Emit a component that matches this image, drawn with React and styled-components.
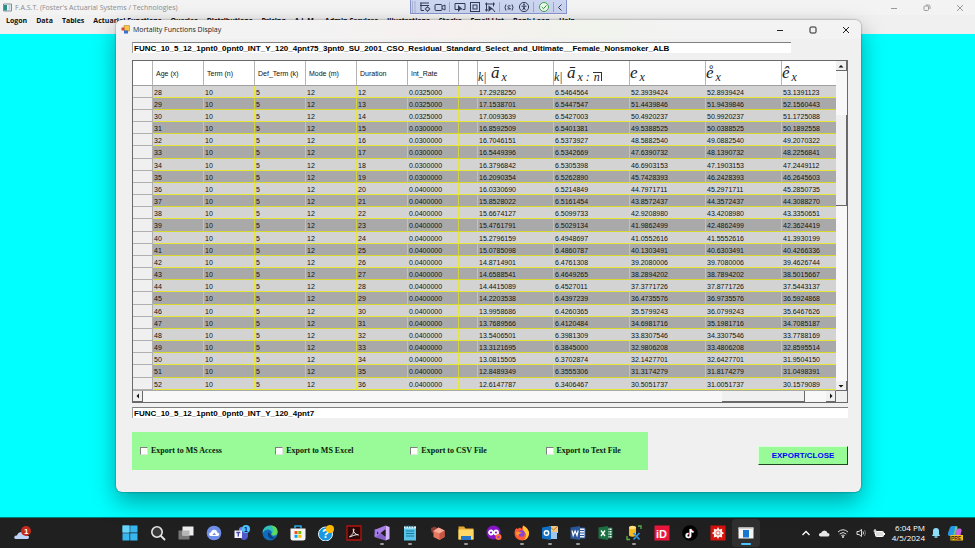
import React from 'react';
import styled, { createGlobalStyle } from 'styled-components';

const GlobalStyles = createGlobalStyle`
  * {
    box-sizing: border-box;
    margin: 0;
    padding: 0;
  }
  body {
    background-color: cyan;
    color: #111;
    font-family: "Open Sans", "Noto Sans", sans-serif;
    font-size: 8px;
  }
  button {
    background: none;
    border: none;
    color: inherit;
    font: inherit;
  }
  svg {
    display: block;
  }
`;

const Screen = styled.div`
  display: flex;
  flex-direction: column;
  height: 100vh;
  overflow: hidden;
  position: relative;
`;

const TitleBar = styled.header`
  align-items: center;
  background: ${(p) => (p.$active ? 'linear-gradient(90deg, #f3f3f3 25%, #f6f0ef 45%, #f1f3ec 62%, #f3f3f3 75%)' : '#f3f3f3')};
  color: ${(p) => (p.$active ? '#222' : '#8c8c8c')};
  display: flex;
  flex-shrink: 0;
  gap: 3px;
  height: ${(p) => (p.$active ? 19 : 15)}px;
  padding-left: ${(p) => (p.$active ? 5 : 3)}px;
`;

const TitleText = styled.h1`
  flex: 1;
  font-size: 7px;
  font-weight: 400;
  line-height: 12px;
  white-space: nowrap;
`;

const WindowButton = styled.button`
  display: flex;
  justify-content: center;
  width: 30px;
`;

const MenuBar = styled.nav`
  background: #f0f0f0;
  display: flex;
  flex-shrink: 0;
  gap: 9px;
  height: 19px;
  padding: 0 6px;
`;

const MenuItem = styled.button`
  font-size: 7px;
  font-weight: 700;
  height: 12px;
  line-height: 12px;
  white-space: nowrap;
`;

const Desktop = styled.main`
  background: cyan;
  flex: 1;
`;

const DebugBar = styled.div`
  align-items: center;
  background: #ccd5f0;
  border: 1px solid #8795cf;
  border-top: none;
  display: flex;
  height: 14px;
  justify-content: space-between;
  left: 410px;
  padding: 0 3px 0 1px;
  position: absolute;
  top: 0;
  width: 157px;
`;

const Divider = styled.span`
  background: #9aa6cf;
  height: 10px;
  width: 1px;
`;

const Dialog = styled.section`
  background: #f0f0f0;
  border-radius: 6px;
  bottom: 56px;
  box-shadow: 0 0 2px rgba(0, 0, 0, 0.5), 0 10px 24px rgba(0, 0, 0, 0.36);
  display: flex;
  flex-direction: column;
  left: 116px;
  overflow: hidden;
  position: absolute;
  right: 114px;
  top: 20px;
`;

const DialogBody = styled.div`
  display: flex;
  flex: 1;
  flex-direction: column;
  min-height: 0;
  padding: 3px 13px 22px 16px;
`;

const TextBox = styled.input`
  background: white;
  border: none;
  border-left: 1px solid #a0a0a0;
  border-top: 1px solid #808080;
  color: black;
  flex-shrink: 0;
  font-family: "Liberation Sans", Arial, sans-serif;
  font-size: 8px;
  font-weight: 700;
  height: 11px;
  line-height: 10px;
  outline: none;
  padding-left: 1px;
  width: ${(p) => p.$width};
`;

const GridFrame = styled.div`
  background: #f0f0f0;
  border: 1px solid #696969;
  display: grid;
  flex: 1;
  grid-template-columns: 1fr 11px;
  grid-template-rows: 1fr 11px;
  margin: 7px 0 4px;
  min-height: 0;
`;

const GridView = styled.div`
  background: #a9a9a9;
  min-height: 0;
  overflow: hidden;
`;

const Table = styled.table`
  border-collapse: separate;
  border-spacing: 0;
  font-family: "Liberation Sans", Arial, sans-serif;
  font-size: 7px;
  line-height: 9px;
  table-layout: fixed;
  width: 100%;
`;

const Col = styled.col`
  width: ${(p) => (p.$width ? `${p.$width}px` : 'auto')};
`;

const HeadCell = styled.th`
  background: white;
  border-bottom: 1px solid #a0a0a0;
  border-right: 1px solid #b4b4b4;
  font-weight: 400;
  height: 25px;
  padding: 0 0 0 ${(p) => (p.$math ? 0 : 3)}px;
  text-align: left;
  white-space: nowrap;
  &:last-child {
    border-right: none;
  }
`;

const RowHead = styled.th`
  background: #f0f0f0;
  border-bottom: 1px solid #b0b0b0;
  border-right: 1px solid #b0b0b0;
`;

const Cell = styled.td`
  background: #d3d3d3;
  border-bottom: 1px solid #e6e636;
  border-right: 1px solid #e6e64a;
  padding: 1px 0 0 1px;
  white-space: nowrap;
  &:last-child {
    border-right: none;
  }
`;

const Row = styled.tr`
  height: 12px;
  &:nth-child(6n) {
    height: 13px;
  }
  &:nth-child(even) ${Cell} {
    background: #a9a9a9;
    border-bottom-color: #d8d82c;
    border-right-color: #d2d23c;
  }
`;

const Formula = styled.span`
  color: #222;
  display: block;
  font-family: "Liberation Serif", "Times New Roman", serif;
  font-size: 17px;
  font-style: italic;
  line-height: 20px;
`;

const Low = styled.sub`
  font-size: 12px;
  line-height: 0;
  padding-left: ${(p) => (p.$after ? 2 : 0)}px;
  vertical-align: -3px;
`;

const Angle = styled.span`
  border-right: 1px solid #333;
  border-top: 1px solid #333;
  display: inline-block;
  line-height: 8px;
  padding: 0 1px;
`;

const ScrollBar = styled.div`
  background: #f8f8f8;
  display: flex;
  flex-direction: ${(p) => (p.$vertical ? 'column' : 'row')};
`;

const ScrollButton = styled.button`
  align-items: center;
  background: #f0f0f0;
  border-bottom: 1px solid #696969;
  border-right: 1px solid #696969;
  display: flex;
  flex-shrink: 0;
  height: ${(p) => (p.$vertical ? '10px' : 'auto')};
  justify-content: center;
  width: ${(p) => (p.$vertical ? 'auto' : '10px')};
`;

const Track = styled.span`
  flex: ${(p) => p.$grow};
`;

const Thumb = styled.span`
  background: #f0f0f0;
  border-bottom: 1px solid #696969;
  border-right: 1px solid #696969;
  flex: ${(p) => p.$grow};
`;

const Footer = styled.footer`
  align-items: center;
  display: flex;
  flex-shrink: 0;
  justify-content: space-between;
  margin-top: 14px;
`;

const ExportPanel = styled.fieldset`
  align-items: center;
  background: #98fb98;
  border: none;
  display: grid;
  grid-template-columns: 1fr 1fr 1fr 76px;
  height: 38px;
  padding: 0 26px 0 8px;
  width: 72%;
`;

const CheckLabel = styled.label`
  align-items: center;
  color: #0a1a0a;
  display: flex;
  font-family: "Liberation Serif", "Times New Roman", serif;
  font-size: 8px;
  font-weight: 700;
  gap: 3px;
  line-height: 10px;
  white-space: nowrap;
`;

const CheckBox = styled.input`
  appearance: none;
  background: white;
  border: 1px solid #e3e3e3;
  border-left-color: #808080;
  border-top-color: #808080;
  height: 8px;
  width: 8px;
  &:checked {
    background: #333;
  }
`;

const ExportButton = styled.button`
  background: #98fb98;
  border: 1px solid #d8ffd8;
  border-bottom-color: #1f4a1f;
  border-right-color: #1f4a1f;
  color: blue;
  font-family: "Liberation Sans", Arial, sans-serif;
  font-size: 8px;
  font-weight: 700;
  height: 19px;
  margin-top: 8px;
  width: 90px;
`;

const TaskBar = styled.footer`
  align-items: center;
  background: #202020;
  border-top: 1px solid #007c7c;
  color: white;
  display: flex;
  flex-shrink: 0;
  height: 31px;
`;

const Weather = styled.button`
  padding-left: 13px;
  width: 116px;
`;

const TaskButton = styled.button`
  align-items: center;
  background: ${(p) => (p.$active ? '#303030' : 'none')};
  border-radius: 4px;
  display: flex;
  flex-direction: column;
  gap: 2px;
  height: 28px;
  padding-top: 6px;
  width: 28px;
`;

const Indicator = styled.span`
  background: ${(p) => (p.$active ? '#4cc2ff' : '#9a9a9a')};
  border-radius: 1px;
  height: 2px;
  width: ${(p) => (p.$active ? 10 : 4)}px;
`;

const Tray = styled.div`
  align-items: center;
  display: flex;
  gap: 7px;
  margin-left: auto;
  padding-right: 12px;
`;

const Clock = styled.time`
  font-size: 8px;
  line-height: 10px;
  text-align: right;
`;

const menus = [
  'Logon', 'Data', 'Tables', 'Actuarial Functions', 'Queries', 'Distributions', 'Pricing',
  'A.L.M.', 'Admin Services', 'Illustrations', 'Stocks', 'Email List', 'Bank Loan', 'Help',
];

// age, rate, k|a_x, k|a_x:n, e_x, complete e_x, e_x hat
const rows = [
  [28, '0.0325000', '17.2928250', '6.5464564', '52.3939424', '52.8939424', '53.1391123'],
  [29, '0.0325000', '17.1538701', '6.5447547', '51.4439846', '51.9439846', '52.1560443'],
  [30, '0.0325000', '17.0093639', '6.5427003', '50.4920237', '50.9920237', '51.1725088'],
  [31, '0.0300000', '16.8592509', '6.5401381', '49.5388525', '50.0388525', '50.1892558'],
  [32, '0.0300000', '16.7046151', '6.5373927', '48.5882540', '49.0882540', '49.2070322'],
  [33, '0.0300000', '16.5449396', '6.5342669', '47.6390732', '48.1390732', '48.2256841'],
  [34, '0.0300000', '16.3796842', '6.5305398', '46.6903153', '47.1903153', '47.2449112'],
  [35, '0.0300000', '16.2090354', '6.5262890', '45.7428393', '46.2428393', '46.2645603'],
  [36, '0.0400000', '16.0330690', '6.5214849', '44.7971711', '45.2971711', '45.2850735'],
  [37, '0.0400000', '15.8528022', '6.5161454', '43.8572437', '44.3572437', '44.3088270'],
  [38, '0.0400000', '15.6674127', '6.5099733', '42.9208980', '43.4208980', '43.3350651'],
  [39, '0.0400000', '15.4761791', '6.5029134', '41.9862499', '42.4862499', '42.3624419'],
  [40, '0.0400000', '15.2796159', '6.4948697', '41.0552616', '41.5552616', '41.3930199'],
  [41, '0.0400000', '15.0785098', '6.4860787', '40.1303491', '40.6303491', '40.4266336'],
  [42, '0.0400000', '14.8714901', '6.4761308', '39.2080006', '39.7080006', '39.4626744'],
  [43, '0.0400000', '14.6588541', '6.4649265', '38.2894202', '38.7894202', '38.5015667'],
  [44, '0.0400000', '14.4415089', '6.4527011', '37.3771726', '37.8771726', '37.5443137'],
  [45, '0.0400000', '14.2203538', '6.4397239', '36.4735576', '36.9735576', '36.5924868'],
  [46, '0.0400000', '13.9958686', '6.4260365', '35.5799243', '36.0799243', '35.6467626'],
  [47, '0.0400000', '13.7689566', '6.4120484', '34.6981716', '35.1981716', '34.7085187'],
  [48, '0.0400000', '13.5406501', '6.3981309', '33.8307546', '34.3307546', '33.7788169'],
  [49, '0.0400000', '13.3121695', '6.3845000', '32.9806208', '33.4806208', '32.8595514'],
  [50, '0.0400000', '13.0815505', '6.3702874', '32.1427701', '32.6427701', '31.9504150'],
  [51, '0.0400000', '12.8489349', '6.3555306', '31.3174279', '31.8174279', '31.0498391'],
  [52, '0.0400000', '12.6147787', '6.3406467', '30.5051737', '31.0051737', '30.1579089'],
];

const columnWidths = [20, 51, 51, 51, 51, 51, 51, 19, 76, 76, 76, 76, null];

function Svg({ size = 16, width, children, label }) {
  return (
    <svg width={width || size} height={size} viewBox={`0 0 ${width || size} ${size}`} fill="none" role="img" aria-label={label}>
      {children}
    </svg>
  );
}

function WindowButtons({ restored, color }) {
  return (
    <>
      <WindowButton type="button" aria-label="Minimize">
        <Svg size={8}><path d="M1 4.5h6" stroke={color} /></Svg>
      </WindowButton>
      <WindowButton type="button" aria-label="Maximize">
        <Svg size={8}>
          {restored && <path d="M3 1h2.500Q7 1 7 2.500V5" stroke={color} />}
          <rect x="1" y={restored ? 2 : 1} width={restored ? 4.5 : 6} height={restored ? 4.5 : 6} rx="1" stroke={color} />
        </Svg>
      </WindowButton>
      <WindowButton type="button" aria-label="Close">
        <Svg size={8}><path d="M1 1l6 6M7 1L1 7" stroke={color} /></Svg>
      </WindowButton>
    </>
  );
}

function Arrow({ d }) {
  return <Svg size={6}><path d={d} fill="#111" /></Svg>;
}

function DebugToolbar() {
  const ink = '#333b55';
  return (
    <DebugBar role="toolbar" aria-label="Debug">
      <Svg size={12} width={4}>
        {[1, 3, 5, 7, 9, 11].map((y) => <path key={y} d={`M0 ${y}h1M2.500 ${y}h1`} stroke="#8490b8" />)}
      </Svg>
      <Svg size={12}>
        <path d="M1 2h9M1 4.500h9M2 2v7.500h3" stroke={ink} />
        <circle cx="8.500" cy="8" r="1.800" stroke={ink} />
        <path d="M8.500 5.300v1M8.500 9.700v1M5.800 8h1M10.200 8h1" stroke={ink} />
      </Svg>
      <Svg size={12}>
        <rect x="1" y="3.500" width="7" height="6" rx="1" stroke={ink} />
        <path d="M8 5.500l3-1.500v5L8 7.500" stroke={ink} />
      </Svg>
      <Divider />
      <Svg size={12}>
        <path d="M4 8.500H1v-6h10v6H9" stroke={ink} />
        <path d="M4 4l5 4.500H6.500L4 11z" fill={ink} />
      </Svg>
      <Svg size={12}>
        <rect x="1.500" y="1.500" width="9" height="9" stroke={ink} />
        <rect x="4" y="4" width="4" height="4" stroke={ink} />
      </Svg>
      <Svg size={12}>
        <path d="M1 3h10M2.500 1.500v9M9.500 1.500v4M1 9h3" stroke={ink} />
        <path d="M4.500 4.500l5.500 4H7l-2.500 2.500z" fill={ink} />
        <path d="M9 8.500l2 2.500" stroke={ink} />
      </Svg>
      <Divider />
      <Svg size={12}>
        <path d="M3 3.500Q1 6.500 3 9.500M9 3.500q2 3 0 6M7.500 5Q5 4 5 5.500T7 7.500 4.500 8" stroke={ink} />
      </Svg>
      <Svg size={12}>
        <circle cx="6" cy="6" r="4.600" stroke={ink} />
        <circle cx="6" cy="3.500" r="0.900" fill={ink} />
        <path d="M3.500 5.200h5M6 5v2.200M6 6.500L4.700 9M6 6.500L7.300 9" stroke={ink} />
      </Svg>
      <Divider />
      <Svg size={12}>
        <circle cx="6" cy="6" r="4.500" fill="#eef8ee" stroke="#3ea34a" />
        <path d="M3.800 6l1.700 1.700 3-3.400" stroke="#2b9438" />
      </Svg>
      <Divider />
      <Svg size={12} width={6}><path d="M4.500 3.500L1.500 6.500l3 3" stroke={ink} /></Svg>
    </DebugBar>
  );
}

const iconText = {
  fontFamily: '"Liberation Sans", Arial, sans-serif',
  fontWeight: 700,
};

const apps = [
  {
    name: 'Start',
    icon: <><path d="M0.500 0.500h7v7h-7zM8.200 0.500h7.300v7H8.200zM0.500 8.200h7v7.300h-7zM8.200 8.200h7.300v7.300H8.200z" fill="#38b6f0" /><path d="M0.500 0.500h7v7h-7z" fill="#6bd5f8" /></>,
  },
  {
    name: 'Search',
    icon: <><circle cx="7" cy="7" r="5.200" fill="#393939" stroke="#e6e6e6" strokeWidth="1.600" /><path d="M11 11l3.500 3.500" stroke="#e6e6e6" strokeWidth="1.800" strokeLinecap="round" /></>,
  },
  {
    name: 'Task View',
    icon: <><path d="M0.500 5.500h11v9h-11z" fill="#777" /><path d="M4.500 1.500h11v9h-11z" fill="#eee" /><path d="M4.500 5.500h7v5h-7z" fill="#b5b5b5" /></>,
  },
  {
    name: 'Cloud Storage',
    icon: <><circle cx="8" cy="8" r="7.300" fill="#6f8eea" /><path d="M4.500 11Q2.500 10.500 3.200 8.700 3.500 7.500 5 7.500 5.500 4.700 8.200 4.700q2.600 0 3 2.700 2.200.3 2 2-.2 1.600-2 1.600z" fill="white" /><path d="M6.500 10l1.800-2.500L10 10z" fill="#6f8eea" /></>,
  },
  {
    name: 'Teams',
    icon: <><circle cx="7.500" cy="4.500" r="2.500" fill="#7b83eb" /><path d="M6 6.500h8v5q-1 3.500-4 3.500t-4-3.500z" fill="#5059c9" /><path d="M0.500 5.500h7.500v7.500h-7.500z" fill="#f3f3ff" /><path d="M2.300 7.500h4M4.300 7.500v4" stroke="#454da8" strokeWidth="1.400" /><circle cx="12" cy="4" r="4" fill="#4cc2ff" /><text x="10" y="7" fontSize="7" fill="#123" style={iconText}>1</text></>,
  },
  {
    name: 'Edge',
    icon: <><circle cx="8" cy="8" r="7.500" fill="#0f6cbd" /><path d="M0.500 8Q1 0.500 8.500 0.500 15.500 1 15.500 7q-.3 3.500-4 3.500-2.500-.2-2-1.500 1-2.500-1.500-4Q4 3.200 0.500 8z" fill="#35c1b5" /><path d="M9 0.600Q15.500 1 15.500 7q-.3 3.500-4 3.500-2.500-.2-2-1.500Q14 6 9 0.600z" fill="#5fd95a" /><path d="M6.500 7q-2 4.500 2 6.500 3 1 5.500-.8Q9 12.500 8.500 9z" fill="#103f7a" /></>,
  },
  {
    name: 'Microsoft Store',
    icon: <><path d="M5 3.500V1h6v2.500" stroke="#2ea5dd" strokeWidth="1.600" /><path d="M0.500 3.500h15V13q0 2.500-2.500 2.500H3Q0.500 15.500 0.500 13z" fill="#f5f5f5" /><path d="M4.500 6h3v3h-3z" fill="#f25022" /><path d="M8.300 6h3v3h-3z" fill="#7fba00" /><path d="M4.500 9.800h3v3h-3z" fill="#00a4ef" /><path d="M8.300 9.800h3v3h-3z" fill="#ffb900" /></>,
  },
  {
    name: 'Get Help',
    icon: <><circle cx="7.500" cy="9" r="7" fill="#1b97e0" stroke="#e5f5ff" /><text x="4" y="13" fontSize="12" fill="white" style={iconText}>?</text><circle cx="12" cy="4" r="4" fill="#ffb900" /></>,
  },
  {
    name: 'Acrobat',
    icon: <><path d="M1 1h14v14H1z" fill="#2b0808" stroke="#b4140f" strokeWidth="1.300" /><path d="M3.500 12Q8 9 8 4.500 7.500 3 7.200 4.500 7.500 9 12.500 10 12 8.500 3.500 12z" stroke="#eee" /></>,
  },
  {
    name: 'Visual Studio',
    open: true,
    icon: <><path d="M0.500 4.500L2 4l9.500 8v3.500L1.500 12.500l-1-1z" fill="#8661c5" /><path d="M0.500 11.500L2 12l9.500-8V0.500L1.500 4.500z" fill="#a67ee6" /><path d="M11.500 0.500l4 1.500v12l-4 1.500z" fill="#d3b3ff" /><path d="M3 6.500L4.700 8 3 9.500zM11.500 5v6L8 8z" fill="#202020" /></>,
  },
  {
    name: 'Notepad',
    open: true,
    icon: <><path d="M2 1.500h12v14H2z" fill="#58c5e8" /><path d="M2 1.500h12v2H2z" fill="#dff5fc" /><path d="M4 6h8M4 8.500h8M4 11h8" stroke="#17789c" /><path d="M4 0.500v2M6.500 0.500v2M9 0.500v2M11.500 0.500v2" stroke="#286c85" /></>,
  },
  {
    name: 'Blocks',
    icon: <><path d="M1 3l4-1.500L8 4 4 8.500 1.500 7z" fill="#8d3d38" /><path d="M8.500 2.500l6 3v6.500l-5 3-6-3V6z" fill="#e77961" /><path d="M8.500 2.500l6 3-5 3L3.500 6z" fill="#f7ad98" /><path d="M9.500 8.500v6.500l5-3V5.500z" fill="#c85543" /></>,
  },
  {
    name: 'File Explorer',
    open: true,
    icon: <><path d="M0.500 1.500h5.500l1.500 2h8v11h-15z" fill="#e8a92e" /><path d="M0.500 4.500h15v10h-15z" fill="#ffd767" /><path d="M3 11h10v4H3z" fill="#2476c7" /></>,
  },
  {
    name: 'Private Browser',
    icon: <><circle cx="7.500" cy="7.500" r="7" fill="#8716c9" /><circle cx="5" cy="7.500" r="2" stroke="white" strokeWidth="1.800" /><circle cx="10" cy="7.500" r="2" stroke="white" strokeWidth="1.800" /><circle cx="12.500" cy="12" r="3" fill="#ff7139" /><circle cx="12.500" cy="12" r="1.200" fill="#9645d8" /></>,
  },
  {
    name: 'Firefox',
    open: true,
    icon: <><path d="M1 5l1.500-2 1 1L6 2.500 8 4l1-3.500Q15.500 4 15 9q-1 6.500-7 6.500Q0.500 15 0.500 8z" fill="#ff5b36" /><path d="M9 0.500Q15.500 4 15 9q-1 5-5 6 3-4 1.500-7Q8 5 9 0.500z" fill="#ffc52e" /><circle cx="7.500" cy="8.500" r="3.200" fill="#8444d6" /><path d="M2 7q4-1 6 1-3 0-4 3-2-1-2-4z" fill="#ff9833" /></>,
  },
  {
    name: 'Outlook',
    open: true,
    icon: <><path d="M7 1h9v7H7z" fill="#f4c67e" /><path d="M7 1l4.500 4L16 1" stroke="#b87924" /><path d="M7 7h8v7H7z" fill="#9cc6ef" /><path d="M0 2.500l9-1.500v14l-9-1.500z" fill="#1271c4" /><circle cx="4.500" cy="8" r="2.200" stroke="white" strokeWidth="1.400" /></>,
  },
  {
    name: 'Word',
    open: true,
    icon: <><path d="M7 3h8v10H7z" fill="#edf2fb" stroke="#2b579a" /><path d="M10 5.500h4M10 8h4M10 10.500h4" stroke="#2b579a" /><path d="M0.500 2.500L10 1v14l-9.500-1.500z" fill="#2b579a" /><path d="M2 5.500l1.200 5L5.100 6l1.900 4.500 1.200-5" stroke="white" strokeWidth="1.200" /></>,
  },
  {
    name: 'Excel',
    icon: <><path d="M7 3h7v10H7z" fill="#e9f7ee" stroke="#217346" /><path d="M11 3v10M9 5.500h5M9 8h5M9 10.500h5" stroke="#217346" /><path d="M0.500 2.500L10 1v14l-9.500-1.500z" fill="#1c7142" /><path d="M3 5.500l4 5.500M7 5.500L3 11" stroke="white" strokeWidth="1.300" /></>,
  },
  {
    name: 'SQL Tools',
    open: true,
    icon: <><path d="M3 2.500v8q3.500 2.500 7 0v-8z" fill="#f5b921" /><ellipse cx="6.500" cy="2.500" rx="3.500" ry="1.700" fill="#ffe07a" /><path d="M12 1h3v3M1 11v3.500h3" stroke="#5bb04b" strokeWidth="1.300" /><path d="M7.500 8l6 6.500M13.500 8l-6 6.500" stroke="#2f90df" strokeWidth="1.800" /></>,
  },
  {
    name: 'iD',
    icon: <><path d="M0.500 0.500h15v15h-15z" fill="#e8173b" /><text x="2" y="13" fontSize="11" fill="white" style={iconText}>iD</text></>,
  },
  {
    name: 'TikTok',
    icon: <><circle cx="8" cy="8" r="7.800" fill="black" /><path d="M8 4v6.500a2 2 0 1 1-2-2M8 4q.5 2.500 3 3" stroke="#25f4ee" strokeWidth="1.500" /><path d="M9 4v6.500a2 2 0 1 1-2-2M9 4q.5 2.500 3 3" stroke="#fe2c55" strokeWidth="1.500" /><path d="M8.500 4v6.500a2 2 0 1 1-2-2M8.500 4q.5 2.500 3 3" stroke="white" strokeWidth="1.300" /></>,
  },
  {
    name: 'Mathematica',
    icon: <><path d="M0.500 0.500h15v15h-15z" fill="#d5120c" /><path d="M8 2l1.300 2.600 2.900-.8-.2 2.900L14.200 8 12 9.500l.2 2.900-2.900-.6L8 14l-1.300-2.200-2.900.6.200-2.900L1.800 8 4 6.700l-.2-2.900 2.900.8z" fill="#fff2ee" /><circle cx="8" cy="8" r="2" stroke="#e64239" strokeWidth="0.800" /></>,
  },
  {
    name: 'FAST',
    open: true,
    active: true,
    icon: <><path d="M0.500 2.500h15v11h-15z" fill="#f5f5f5" /><path d="M0.500 2.500h15v1.500h-15z" fill="#d3d3d3" /><path d="M5 5h6v7.500H5z" fill="#1577d3" /></>,
  },
];

function SystemTray() {
  return (
    <Tray>
      <Svg size={12} width={10} label="Show hidden icons"><path d="M1.500 8L5 4.500 8.500 8" stroke="white" strokeWidth="1.300" /></Svg>
      <Svg size={12} label="OneDrive"><path d="M2.500 9.500Q0.500 9 1 7.300 1.500 6 3 6q1-2.500 3.500-2.500T9.500 6q2.200.2 2 1.900Q11.300 9.500 9.500 9.500z" fill="#e6e6e6" /></Svg>
      <Svg size={12} label="Wi-Fi"><path d="M1 5q5-4.500 10 0M2.700 7Q6 4 9.300 7M4.300 8.700q1.700-1.500 3.400 0" stroke="#ddd" /><circle cx="6" cy="10" r="0.900" fill="white" /></Svg>
      <Svg size={12} width={10} label="Volume"><path d="M1 4.500h2L5.500 2.500v7L3 7.500H1z" stroke="#ddd" /><path d="M7 4.500q1 1.500 0 3" stroke="#ddd" /><path d="M8.500 3q2 3 0 6" stroke="#777" /></Svg>
      <Svg size={12} label="Battery"><rect x="2.500" y="4.500" width="8" height="5" rx="1" fill="#ddd" stroke="white" /><path d="M11.500 6v2" stroke="white" /><path d="M2 2v5M0.500 4h3" stroke="white" /></Svg>
      <Clock>6:04 PM<br />4/5/2024</Clock>
      <Svg size={12} width={8} label="Notifications"><path d="M4 1q3 0 3 3v3l1 2H0l1-2V4q0-3 3-3z" fill="#8ee0fa" /><path d="M2.500 10h3" stroke="#8ee0fa" strokeWidth="1.500" /></Svg>
      <Svg size={16} label="Copilot">
        <path d="M5 1h4L7 9Q6 11 4 11H2Q0.500 10.500 1 8L3 2.500Q3.500 1 5 1z" fill="#2496e8" />
        <path d="M9 1q2 0 1.500 2L9 8q-.7 3-3 3l2-8q.4-2 1-2z" fill="#5ad18c" />
        <path d="M11 3.500h2q2 0 1.500 2.500l-1 4-6 1 1.500-5q.5-2.500 2-2.500z" fill="#c861db" />
        <path d="M3.500 10H16v5.500H3.500z" fill="#ffc219" />
        <text x="4" y="15" fontSize="5" fill="#222" style={iconText}>PRE</text>
      </Svg>
    </Tray>
  );
}

function ResultsTable() {
  return (
    <Table>
      <colgroup>
        {columnWidths.map((width, i) => <Col key={i} $width={width} />)}
      </colgroup>
      <thead>
        <tr>
          <HeadCell aria-label="Row" />
          {['Age (x)', 'Term (n)', 'Def_Term (k)', 'Mode (m)', 'Duration', 'Int_Rate'].map((label) => (
            <HeadCell key={label} scope="col">{label}</HeadCell>
          ))}
          <HeadCell />
          <HeadCell $math scope="col"><Formula><Low>k|</Low> ā<Low $after>x</Low></Formula></HeadCell>
          <HeadCell $math scope="col"><Formula><Low>k|</Low> ā<Low $after>x : <Angle>n</Angle></Low></Formula></HeadCell>
          <HeadCell $math scope="col"><Formula>e<Low $after>x</Low></Formula></HeadCell>
          <HeadCell $math scope="col"><Formula>{'e\u030a'}<Low $after>x</Low></Formula></HeadCell>
          <HeadCell $math scope="col"><Formula>ê<Low $after>x</Low></Formula></HeadCell>
        </tr>
      </thead>
      <tbody>
        {rows.map(([age, rate, ...values]) => (
          <Row key={age}>
            <RowHead />
            <Cell>{age}</Cell>
            <Cell>10</Cell>
            <Cell>5</Cell>
            <Cell>12</Cell>
            <Cell>{age - 16}</Cell>
            <Cell>{rate}</Cell>
            <Cell />
            {values.map((value, i) => <Cell key={i}>{value}</Cell>)}
          </Row>
        ))}
      </tbody>
    </Table>
  );
}

function MortalityDialog() {
  return (
    <Dialog role="dialog" aria-label="Mortality Functions Display">
      <TitleBar $active>
        <Svg size={9}>
          <path d="M3 0.500h5.500V6H3z" fill="#f3c64b" stroke="#b9862c" strokeWidth="0.600" />
          <path d="M0.500 2.500h3v3h-3z" fill="#d6473a" />
          <path d="M3 5.500h4v3H3z" fill="#3b6fd1" />
        </Svg>
        <TitleText>Mortality Functions Display</TitleText>
        <WindowButtons color="#222" />
      </TitleBar>
      <DialogBody>
        <TextBox
          $width="92%"
          aria-label="Function table"
          defaultValue="FUNC_10_5_12_1pnt0_0pnt0_INT_Y_120_4pnt75_3pnt0_SU_2001_CSO_Residual_Standard_Select_and_Ultimate__Female_Nonsmoker_ALB"
        />
        <GridFrame>
          <GridView><ResultsTable /></GridView>
          <ScrollBar $vertical>
            <ScrollButton $vertical type="button" aria-label="Scroll up"><Arrow d="M0.500 4.500h5L3 2z" /></ScrollButton>
            <Track $grow={44} />
            <Thumb $grow={91} />
            <Track $grow={176} />
            <ScrollButton $vertical type="button" aria-label="Scroll down"><Arrow d="M0.500 2h5L3 4.500z" /></ScrollButton>
          </ScrollBar>
          <ScrollBar>
            <ScrollButton type="button" aria-label="Scroll left"><Arrow d="M4 0.500v5L1.500 3z" /></ScrollButton>
            <Track $grow={582} />
            <Thumb $grow={82} />
            <Track $grow={21} />
            <ScrollButton type="button" aria-label="Scroll right"><Arrow d="M2 0.500v5L4.500 3z" /></ScrollButton>
          </ScrollBar>
        </GridFrame>
        <TextBox $width="100%" aria-label="Export name" defaultValue="FUNC_10_5_12_1pnt0_0pnt0_INT_Y_120_4pnt7" />
        <Footer>
          <ExportPanel>
            {['MS Access', 'MS Excel', 'CSV File', 'Text File'].map((target) => (
              <CheckLabel key={target}>
                <CheckBox type="checkbox" />
                Export to {target}
              </CheckLabel>
            ))}
          </ExportPanel>
          <ExportButton type="button">EXPORT/CLOSE</ExportButton>
        </Footer>
      </DialogBody>
    </Dialog>
  );
}

export default function App() {
  return (
    <>
      <GlobalStyles />
      <Screen>
        <TitleBar>
          <Svg size={9}>
            <path d="M0.500 1h8v7h-8z" fill="#f7fbfb" stroke="#7d8d91" />
            <path d="M1 2h3v5.500H1z" fill="#2d8d86" />
            <path d="M5.500 2h2v5.500h-2z" fill="#b9d5da" />
          </Svg>
          <TitleText>F.A.S.T. (Foster's Actuarial Systems / Technologies)</TitleText>
          <WindowButtons restored color="#999" />
        </TitleBar>
        <MenuBar>
          {menus.map((name) => <MenuItem key={name} type="button">{name}</MenuItem>)}
        </MenuBar>
        <Desktop />
        <TaskBar>
          <Weather type="button" aria-label="Weather">
            <Svg size={16} width={20}>
              <path d="M3 14Q0.500 13.500 1.500 11.500q.7-1.300 2.500-1Q5 7 8.500 7T13 10.500q3.500 0 3 2-.4 1.500-2 1.500z" fill="#bdd3f7" />
              <circle cx="13" cy="6" r="5" fill="#c42b1c" />
              <text x="11" y="9" fontSize="8" fill="white" style={iconText}>1</text>
            </Svg>
          </Weather>
          {apps.map(({ name, icon, open, active }) => (
            <TaskButton key={name} type="button" aria-label={name} $active={active}>
              <Svg>{icon}</Svg>
              {open && <Indicator $active={active} />}
            </TaskButton>
          ))}
          <SystemTray />
        </TaskBar>
        <DebugToolbar />
        <MortalityDialog />
      </Screen>
    </>
  );
}
